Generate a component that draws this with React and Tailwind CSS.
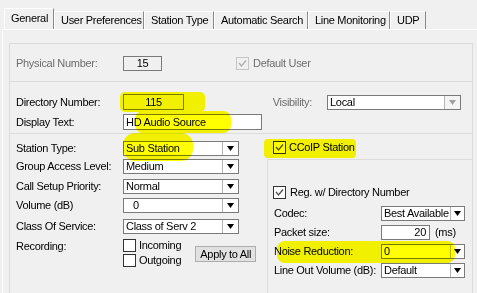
import React from "react";

function Tri({ gray }) {
  return (
    <svg width="7" height="5" viewBox="0 0 7 5">
      <polygon points="0,0 7,0 3.5,5" fill={gray ? "#a0a0a0" : "#000"} />
    </svg>
  );
}

function Select({ value, className = "", btn = "w-[16px]", gray }) {
  return (
    <div className={`flex border border-[#7a7a7a] bg-white ${className}`}>
      <div className="flex-1 overflow-hidden whitespace-nowrap pl-[2px] flex items-center">{value}</div>
      <div className={`${btn} border-l border-[#b5b5b5] flex items-center justify-center ${gray ? "bg-[#f4f4f4]" : "bg-white"}`}>
        <Tri gray={gray} />
      </div>
    </div>
  );
}

function Check({ checked, disabled, className = "" }) {
  return (
    <span
      className={`inline-flex shrink-0 w-[13px] h-[13px] border items-center justify-center ${
        disabled ? "border-[#c4c4c4] bg-[#f0f0f0]" : "border-[#333333] bg-white"
      } ${className}`}
    >
      {checked && (
        <svg width="11" height="11" viewBox="0 0 11 11">
          <polyline
            points="2,5 4.5,8 9,2.5"
            fill="none"
            stroke={disabled ? "#b0b0b0" : "#555555"}
            strokeWidth="1.4"
          />
        </svg>
      )}
    </span>
  );
}

function Tab({ children, active, w }) {
  return (
    <div
      className={`${w} flex items-start border-t border-l border-white border-r border-r-[#8a8a8a] bg-[#f0f0f0] pl-[6px] ${
        active ? "h-[21px] pt-[3px]" : "h-[18px] pt-[2px]"
      }`}
    >
      {children}
    </div>
  );
}

function Label({ children, gray }) {
  return <div className={`w-[107px] shrink-0 ${gray ? "text-[#6d6d6d]" : ""}`}>{children}</div>;
}

function Hl({ className }) {
  return <div className={`absolute bg-[#ffff00] mix-blend-multiply pointer-events-none ${className}`} />;
}

export default function App() {
  return (
    <div className="relative w-[477px] h-[293px] overflow-hidden bg-[#f0f0f0] text-[11px] leading-[13px] text-black font-['Liberation_Sans',Arial,sans-serif] tracking-[-0.3px]">
      {/* Tabs */}
      <div className="flex items-end h-[29px] pl-[4px]">
        <Tab active w="w-[50px]">General</Tab>
        <Tab w="w-[90px]">User Preferences</Tab>
        <Tab w="w-[70px]">Station Type</Tab>
        <Tab w="w-[94px]">Automatic Search</Tab>
        <Tab w="w-[82px]">Line Monitoring</Tab>
        <Tab w="w-[36px]">UDP</Tab>
      </div>

      {/* Panel */}
      <div className="ml-[2px] border-t border-l border-white h-[270px] pt-[13px] pl-[6px]">
        <div className="w-[464px] h-[260px] border border-[#dcdcdc]">
          {/* Section 1 */}
          <div className="h-[38px] border-b border-[#dcdcdc] pt-[12px] pl-[6px]">
            <div className="flex items-center h-[15px]">
              <Label gray>Physical Number:</Label>
              <div className="w-[39px] h-[15px] border border-[#7a7a7a] bg-[#f0f0f0] flex items-center justify-center">15</div>
              <Check checked disabled className="ml-[74px]" />
              <span className="ml-[4px] text-[#6d6d6d]">Default User</span>
            </div>
          </div>

          {/* Section 2 */}
          <div className="h-[52px] border-b border-[#dcdcdc] pt-[12px] pl-[6px]">
            <div className="flex items-center h-[16px]">
              <Label>Directory Number:</Label>
              <div className="w-[61px] h-[16px] border border-[#7a7a7a] flex items-center justify-center">115</div>
              <div className="w-[143px] text-right pr-[15px] text-[#6d6d6d]">Visibility:</div>
              <Select value="Local" className="w-[134px] h-[15px]" gray />
            </div>
            <div className="flex items-center h-[16px] mt-[4px]">
              <Label>Display Text:</Label>
              <div className="w-[139px] h-[16px] border border-[#7a7a7a] bg-white flex items-center pl-[2px]">HD Audio Source</div>
            </div>
          </div>

          {/* Section 3 */}
          <div className="flex">
            {/* Left column */}
            <div className="w-[257px] pl-[6px] pt-[7px]">
              <div className="flex items-center h-[15px]">
                <Label>Station Type:</Label>
                <Select value="Sub Station" className="w-[116px] h-[15px]" />
              </div>
              <div className="flex items-center h-[15px] mt-[3px]">
                <Label>Group Access Level:</Label>
                <Select value="Medium" className="w-[116px] h-[15px]" />
              </div>
              <div className="flex items-center h-[15px] mt-[5px]">
                <Label>Call Setup Priority:</Label>
                <Select value="Normal" className="w-[116px] h-[15px]" />
              </div>
              <div className="flex items-center h-[15px] mt-[4px]">
                <Label>Volume (dB)</Label>
                <Select value={<span className="pl-[7px]">0</span>} className="w-[116px] h-[15px]" />
              </div>
              <div className="flex items-center h-[15px] mt-[6px]">
                <Label>Class Of Service:</Label>
                <Select value="Class of Serv 2" className="w-[116px] h-[15px]" />
              </div>
              <div className="flex mt-[5px]">
                <div className="w-[107px] pt-[1px]">Recording:</div>
                <div className="flex flex-col gap-[2px]">
                  <div className="flex items-center">
                    <Check />
                    <span className="ml-[3px]">Incoming</span>
                  </div>
                  <div className="flex items-center">
                    <Check />
                    <span className="ml-[3px]">Outgoing</span>
                  </div>
                </div>
                <button className="ml-[14px] mt-[7px] w-[61px] h-[16px] border border-[#adadad] bg-[#e1e1e1] flex items-center justify-center">
                  Apply to All
                </button>
              </div>
            </div>

            {/* Right column */}
            <div className="flex-1 pt-[7px]">
              <div className="flex items-center pl-[6px] h-[13px]">
                <Check checked />
                <span className="ml-[3px]">CCoIP Station</span>
              </div>
              <div className="mt-[5px] h-[140px] border-t border-l border-[#dcdcdc] pl-[5px] pt-[26px]">
                <div className="flex items-center h-[13px]">
                  <Check checked />
                  <span className="ml-[4px]">Reg. w/ Directory Number</span>
                </div>
                <div className="pl-[1px]">
                  <div className="flex items-center h-[15px] mt-[7px]">
                    <Label>Codec:</Label>
                    <Select value="Best Available" className="w-[84px] h-[15px]" btn="w-[14px]" />
                  </div>
                  <div className="flex items-center h-[15px] mt-[4px]">
                    <Label>Packet size:</Label>
                    <div className="w-[49px] h-[15px] border border-[#7a7a7a] bg-white flex items-center justify-end pr-[3px]">20</div>
                    <span className="ml-[5px]">(ms)</span>
                  </div>
                  <div className="flex items-center h-[15px] mt-[4px]">
                    <Label>Noise Reduction:</Label>
                    <Select value="0" className="w-[84px] h-[15px]" btn="w-[14px]" />
                  </div>
                  <div className="flex items-center h-[15px] mt-[4px]">
                    <Label>Line Out Volume (dB):</Label>
                    <Select value="Default" className="w-[84px] h-[15px]" btn="w-[14px]" />
                  </div>
                </div>
              </div>
            </div>
          </div>
        </div>
      </div>

      {/* Highlighter marks */}
      <Hl className="left-[120px] top-[92px] w-[85px] h-[20px] rounded-[5px]" />
      <Hl className="left-[135px] top-[111px] w-[96px] h-[22px] rounded-[8px]" />
      <Hl className="left-[123px] top-[133px] w-[70px] h-[28px] rounded-[12px]" />
      <Hl className="left-[264px] top-[139px] w-[92px] h-[19px] rounded-[4px]" />
      <Hl className="left-[277px] top-[241px] w-[178px] h-[22px] rounded-[8px]" />
    </div>
  );
}
